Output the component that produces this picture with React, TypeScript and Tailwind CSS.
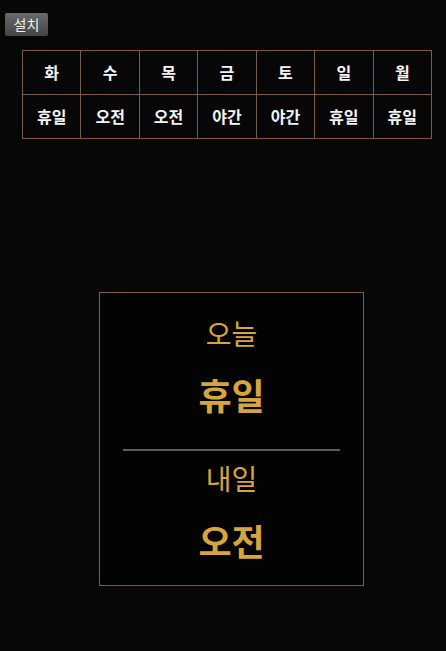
const days = ["화", "수", "목", "금", "토", "일", "월"];
const shifts = ["휴일", "오전", "오전", "야간", "야간", "휴일", "휴일"];

const font = { fontFamily: '"Noto Sans CJK KR", "Noto Sans", sans-serif' };

export default function App() {
  return (
    <div className="h-[651px] w-[446px] bg-[#070707]" style={font}>
      <div className="px-[5px] pt-[11px]">
        <button className="h-[23px] w-[43px] rounded-[2px] bg-gradient-to-b from-[#6a6a6a] to-[#444] text-[14px] leading-none text-[#f2f2f2]">
          설치
        </button>
      </div>

      <table className="ml-[22px] mt-[14px] w-[410px] table-fixed border-collapse">
        <tbody>
          <tr>
            {days.map((d) => (
              <td
                key={d}
                className="h-[44px] border border-[#7a5e44] text-center text-[16px] font-bold text-[#f4f4f4]"
              >
                {d}
              </td>
            ))}
          </tr>
          <tr>
            {shifts.map((s, i) => (
              <td
                key={i}
                className="h-[44px] border border-[#7a5e44] text-center text-[16px] font-bold text-[#f4f4f4]"
              >
                {s}
              </td>
            ))}
          </tr>
        </tbody>
      </table>

      <div className="ml-[99px] mt-[153px] flex h-[294px] w-[265px] flex-col items-center border border-[#7f6037] bg-[#030303]">
        <div className="mt-[20px] text-[28px] leading-[40px] text-[#d6a63c]">오늘</div>
        <div className="mt-[19px] text-[36px] font-bold leading-[44px] text-[#d6a63c]">휴일</div>
        <div className="mt-[33px] h-[2px] w-[217px] bg-[#5a5a5a]" />
        <div className="mt-[7px] text-[28px] leading-[40px] text-[#d6a63c]">내일</div>
        <div className="mt-[20px] text-[36px] font-bold leading-[44px] text-[#d6a63c]">오전</div>
      </div>
    </div>
  );
}
